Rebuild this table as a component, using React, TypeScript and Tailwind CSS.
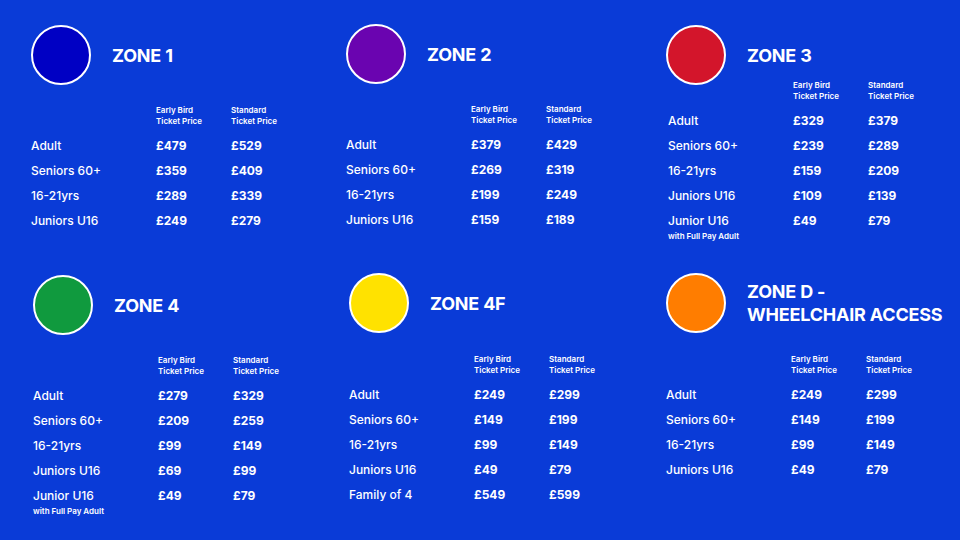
type Row = { label: string; early: string; standard: string; note?: string }

type Zone = {
  title: string[]
  color: string
  pad: string
  gap: string
  rows: Row[]
}

const zones: Zone[] = [
  {
    title: ['ZONE 1'],
    color: 'bg-[#0000c4]',
    pad: 'pl-[31px] pt-[25px]',
    gap: 'mt-[20px]',
    rows: [
      { label: 'Adult', early: '£479', standard: '£529' },
      { label: 'Seniors 60+', early: '£359', standard: '£409' },
      { label: '16-21yrs', early: '£289', standard: '£339' },
      { label: 'Juniors U16', early: '£249', standard: '£279' },
    ],
  },
  {
    title: ['ZONE 2'],
    color: 'bg-[#6a04b0]',
    pad: 'pl-[26px] pt-[24px]',
    gap: 'mt-[20px]',
    rows: [
      { label: 'Adult', early: '£379', standard: '£429' },
      { label: 'Seniors 60+', early: '£269', standard: '£319' },
      { label: '16-21yrs', early: '£199', standard: '£249' },
      { label: 'Juniors U16', early: '£159', standard: '£189' },
    ],
  },
  {
    title: ['ZONE 3'],
    color: 'bg-[#d3152b]',
    pad: 'pl-[26px] pt-[25px]',
    gap: '-mt-[5px] pl-[2px]',
    rows: [
      { label: 'Adult', early: '£329', standard: '£379' },
      { label: 'Seniors 60+', early: '£239', standard: '£289' },
      { label: '16-21yrs', early: '£159', standard: '£209' },
      { label: 'Juniors U16', early: '£109', standard: '£139' },
      { label: 'Junior U16', early: '£49', standard: '£79', note: 'with Full Pay Adult' },
    ],
  },
  {
    title: ['ZONE 4'],
    color: 'bg-[#109a3e]',
    pad: 'pl-[33px] pt-[5px]',
    gap: 'mt-[20px]',
    rows: [
      { label: 'Adult', early: '£279', standard: '£329' },
      { label: 'Seniors 60+', early: '£209', standard: '£259' },
      { label: '16-21yrs', early: '£99', standard: '£149' },
      { label: 'Juniors U16', early: '£69', standard: '£99' },
      { label: 'Junior U16', early: '£49', standard: '£79', note: 'with Full Pay Adult' },
    ],
  },
  {
    title: ['ZONE 4F'],
    color: 'bg-[#ffe200]',
    pad: 'pl-[29px] pt-[3px]',
    gap: 'mt-[21px]',
    rows: [
      { label: 'Adult', early: '£249', standard: '£299' },
      { label: 'Seniors 60+', early: '£149', standard: '£199' },
      { label: '16-21yrs', early: '£99', standard: '£149' },
      { label: 'Juniors U16', early: '£49', standard: '£79' },
      { label: 'Family of 4', early: '£549', standard: '£599' },
    ],
  },
  {
    title: ['ZONE D -', 'WHEELCHAIR ACCESS'],
    color: 'bg-[#ff7d00]',
    pad: 'pl-[26px] pt-[3px]',
    gap: 'mt-[21px]',
    rows: [
      { label: 'Adult', early: '£249', standard: '£299' },
      { label: 'Seniors 60+', early: '£149', standard: '£199' },
      { label: '16-21yrs', early: '£99', standard: '£149' },
      { label: 'Juniors U16', early: '£49', standard: '£79' },
    ],
  },
]

function PriceTable({ rows, gap }: { rows: Row[]; gap: string }) {
  return (
    <div className={gap}>
      <div className="grid grid-cols-[125px_75px_1fr] mb-[6px] text-[8px] leading-[11px] font-semibold">
        <div />
        <div>
          Early Bird
          <br />
          Ticket Price
        </div>
        <div>
          Standard
          <br />
          Ticket Price
        </div>
      </div>
      {rows.map((r) => (
        <div key={r.label + r.early}>
          <div className="grid grid-cols-[125px_75px_1fr] h-[25px] items-center text-[12px]">
            <div className="font-medium">{r.label}</div>
            <div className="font-bold">{r.early}</div>
            <div className="font-bold">{r.standard}</div>
          </div>
          {r.note ? (
            <div className="-mt-[2px] text-[8px] leading-[10px] font-semibold">{r.note}</div>
          ) : null}
        </div>
      ))}
    </div>
  )
}

function ZoneBlock({ z }: { z: Zone }) {
  return (
    <section className={z.pad}>
      <div className="flex items-center gap-[21px]">
        <div className={`w-[60px] h-[60px] rounded-full border-2 border-white shrink-0 ${z.color}`} />
        <h2 className="text-[18px] leading-[23px] font-bold tracking-[-0.2px]">
          {z.title.map((t) => (
            <div key={t}>{t}</div>
          ))}
        </h2>
      </div>
      <PriceTable rows={z.rows} gap={z.gap} />
    </section>
  )
}

export default function App() {
  return (
    <div className="w-[960px] h-[540px] overflow-hidden bg-[#0a3bd7] text-white font-['Inter',sans-serif] grid grid-cols-3 grid-rows-[270px_270px]">
      {zones.map((z) => (
        <ZoneBlock key={z.title[0]} z={z} />
      ))}
    </div>
  )
}
